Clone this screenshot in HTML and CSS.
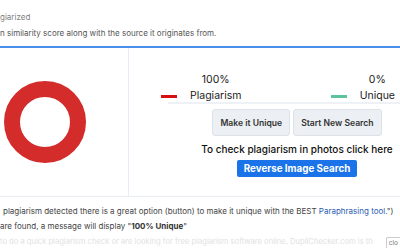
FILE: index.html
```html
<!DOCTYPE html>
<html>
<head>
    <title>Plagiarism Report</title>
    <link rel="stylesheet" href="styles.css">
</head>
<body>
    <div class="intro">
        <p class="status">giarized</p>
        <p class="summary">n similarity score along with the source it originates from.</p>
    </div>

    <div class="result">
        <div class="chart">
            <svg width="82" height="82" viewBox="0 0 82 82">
                <circle cx="41" cy="41" r="33" fill="none" stroke="#d42b2b" stroke-width="16"/>
            </svg>
        </div>
        <div class="panel">
            <div class="legend">
                <div class="legend-item">
                    <span class="swatch plag"></span>
                    <div class="legend-text">
                        <span class="percent">100%</span>
                        <span class="label">Plagiarism</span>
                    </div>
                </div>
                <div class="legend-item">
                    <span class="swatch uniq"></span>
                    <div class="legend-text">
                        <span class="percent">0%</span>
                        <span class="label">Unique</span>
                    </div>
                </div>
            </div>
            <div class="actions">
                <div class="action-buttons">
                    <button class="btn-light">Make it Unique</button>
                    <button class="btn-light">Start New Search</button>
                </div>
                <p class="photo-note">To check plagiarism in photos click here</p>
                <button class="btn-blue">Reverse Image Search</button>
            </div>
        </div>
    </div>

    <div class="notes">
        <p class="note-1">plagiarism detected there is a great option (button) to make it unique with the BEST <a href="#">Paraphrasing tool.</a>")</p>
        <p>are found, a message will display "<strong>100% Unique</strong>"</p>
    </div>

    <div class="banner">
        <p>to do a quick plagiarism check or are looking for free plagiarism software online, DupliChecker.com is th</p>
        <button class="close">clo</button>
    </div>
</body>
</html>
```

FILE: styles.css
```css
body {
    margin: 0;
    font-family: Inter, "Open Sans", sans-serif;
    background: white;
    overflow: hidden;
    width: 400px;
}
p {
    margin: 0;
}
.intro {
    padding-top: 11px;
    height: 35px;
}
.status {
    font-size: 8px;
    color: #808080;
    line-height: 12px;
}
.summary {
    margin-top: 4px;
    font-size: 8px;
    color: #555;
    line-height: 12px;
}
.result {
    display: flex;
    border-top: 2px solid #4a8fe7;
    border-bottom: 1px solid #e9edf2;
    height: 148px;
}
.chart {
    width: 124px;
    padding-left: 4px;
    border-right: 1px solid #e6edf6;
    display: flex;
    align-items: center;
}
.panel {
    flex: 1;
}
.legend {
    display: flex;
    justify-content: space-between;
    padding: 17px 5px 0 32px;
    height: 37px;
}
.legend-item {
    display: flex;
    align-items: flex-end;
    gap: 13px;
}
.legend-text {
    display: flex;
    flex-direction: column;
    align-items: center;
    gap: 4px;
    font-size: 10.5px;
    color: #222;
    line-height: 12px;
}
.swatch {
    width: 16px;
    height: 3px;
    margin-bottom: 4px;
}
.plag {
    background: #d90f0f;
}
.uniq {
    background: #5cc39c;
}
.actions {
    margin-left: 39px;
    border-top: 2px solid #eef1f5;
    padding: 5px 0 0 26px;
    text-align: center;
}
.action-buttons {
    display: flex;
    justify-content: center;
    gap: 3px;
}
.btn-light {
    font-family: inherit;
    height: 27px;
    padding: 0 7px;
    font-size: 8.6px;
    font-weight: 600;
    color: #333;
    background: #eceff3;
    border: 1px solid #dde2e8;
    border-radius: 3px;
}
.photo-note {
    margin-top: 7px;
    font-size: 10px;
    font-weight: 500;
    color: #111;
    line-height: 13px;
}
.btn-blue {
    font-family: inherit;
    margin-top: 2px;
    height: 17px;
    width: 120px;
    padding: 0;
    font-size: 9.8px;
    font-weight: 700;
    color: white;
    background: #1a73e8;
    border: none;
    border-radius: 2px;
}
.notes {
    padding-top: 7px;
    font-size: 8px;
    color: #444;
    line-height: 15px;
}
.note-1 {
    padding-left: 3px;
}
.notes a {
    color: #2a5db0;
    text-decoration: none;
}
.notes strong {
    font-weight: 700;
    color: #333;
}
.banner {
    display: flex;
    justify-content: space-between;
    align-items: flex-start;
    height: 20px;
    background: linear-gradient(#7896cc, #7896cc) 18px 100% / calc(100% - 18px) 1px no-repeat;
}
.banner p {
    white-space: nowrap;
    font-size: 7.6px;
    line-height: 16px;
    color: #e2e2e2;
}
.close {
    flex: none;
    margin-top: 3px;
    height: 12px;
    padding: 0 2px;
    font-family: inherit;
    font-size: 6.5px;
    color: #777;
    background: white;
    border: 1px solid #ccc;
    border-right: none;
    border-radius: 2px 0 0 2px;
}
```
